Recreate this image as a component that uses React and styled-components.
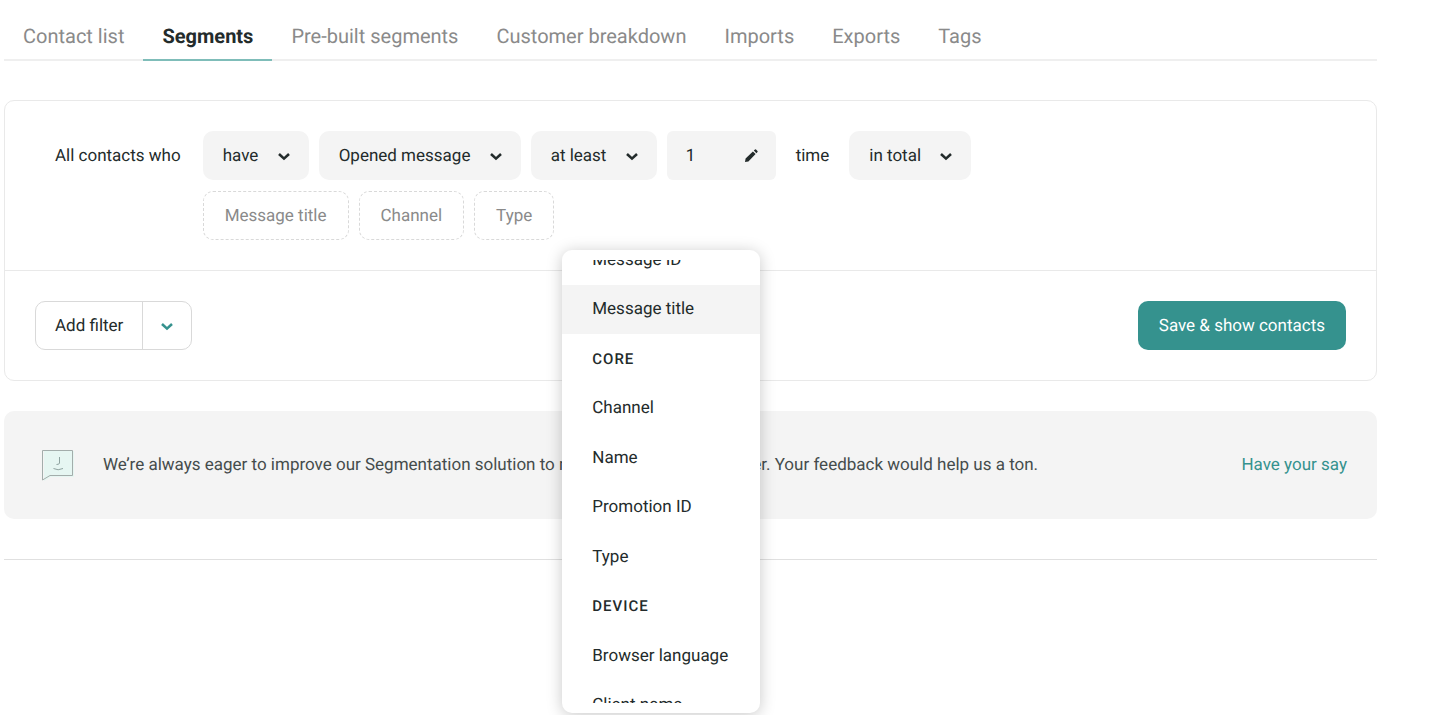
import React, { useLayoutEffect, useRef } from "react";
import styled, { createGlobalStyle } from "styled-components";

const GlobalStyle = createGlobalStyle`
  * {
    box-sizing: border-box;
  }

  body {
    margin: 0;
    background: #ffffff;
    color: #232b2b;
    font-family: Roboto, "Liberation Sans", sans-serif;
    font-size: 17px;
    line-height: 24px;
    text-rendering: geometricPrecision;
  }

  button,
  select,
  input {
    font: inherit;
    color: inherit;
    text-rendering: inherit;
  }
`;

const Page = styled.main`
  min-height: 100vh;
  padding: 12px 63px 0 4px;
`;

const Tabs = styled.nav`
  display: flex;
  border-bottom: 2px solid #efefef;
`;

const Tab = styled.a`
  margin-bottom: -2px;
  padding: 12px 19px 11px;
  border-bottom: 2px solid ${(props) => (props.$active ? "#7fbdb9" : "transparent")};
  color: ${(props) => (props.$active ? "#232b2b" : "#8a8a8a")};
  font-size: 20px;
  font-weight: ${(props) => (props.$active ? 700 : 400)};
  text-decoration: none;
`;

const Card = styled.section`
  margin-top: 39px;
  border: 1px solid #e9e9e9;
  border-radius: 10px;
`;

const Conditions = styled.div`
  display: flex;
  gap: 22px;
  padding: 30px 50px;
  border-bottom: 1px solid #e9e9e9;
`;

const Lead = styled.span`
  padding-top: 13px;
`;

const Word = styled(Lead)`
  padding-left: 10px;
  padding-right: 10px;
`;

const Rows = styled.div`
  display: flex;
  flex-direction: column;
  gap: 11px;
`;

const Row = styled.div`
  display: flex;
  gap: 10px;
`;

const SelectBox = styled.div`
  display: grid;
  align-items: center;

  > * {
    grid-area: 1 / 1;
  }

  > svg {
    justify-self: end;
    margin-right: 18px;
    pointer-events: none;
  }
`;

const Select = styled.select`
  appearance: none;
  height: 49px;
  padding: 0 50px 0 20px;
  border: 0;
  border-radius: 10px;
  background: #f4f4f4;
`;

const NumberBox = styled.label`
  display: flex;
  align-items: center;
  width: 109px;
  height: 49px;
  padding: 0 18px 0 19px;
  border-radius: 6px;
  background: #f4f4f4;
`;

const NumberInput = styled.input`
  flex: 1;
  min-width: 0;
  padding: 0;
  border: 0;
  background: none;
  outline: none;
`;

const Property = styled.button`
  height: 49px;
  padding: 0 21px;
  border: 1px dashed #d9d9d9;
  border-radius: 10px;
  background: #ffffff;
  color: #8a8a8a;
`;

const MenuAnchor = styled.div`
  position: relative;
`;

const Menu = styled.div`
  position: absolute;
  top: 59px;
  left: -2px;
  z-index: 1;
  width: 198px;
  padding: 10px 0;
  border-radius: 10px;
  background: #ffffff;
  box-shadow: 0 2px 16px rgba(0, 0, 0, 0.22);
`;

const MenuScroll = styled.div`
  height: 443px;
  overflow-y: auto;
  scrollbar-width: none;
`;

const MenuList = styled.ul`
  display: grid;
  grid-auto-rows: 1fr;
  height: 495px;
  margin: 0;
  padding: 0;
  list-style: none;
`;

const MenuHeading = styled.li`
  display: flex;
  align-items: center;
  padding: 0 30px;
  font-size: 15px;
  font-weight: 500;
  letter-spacing: 1px;
  text-transform: uppercase;
`;

const MenuItem = styled.button`
  width: 100%;
  height: 100%;
  padding: 0 0 0 30px;
  border: 0;
  background: ${(props) => (props.$highlighted ? "#f4f4f4" : "none")};
  text-align: left;
  white-space: nowrap;
`;

const Actions = styled.div`
  display: flex;
  justify-content: space-between;
  padding: 30px;
`;

const SplitButton = styled.div`
  display: flex;
  height: 49px;
  border: 1px solid #d9d9d9;
  border-radius: 10px;
`;

const SplitMain = styled.button`
  padding: 0 19px;
  border: 0;
  background: none;
`;

const SplitToggle = styled.button`
  display: flex;
  align-items: center;
  padding: 0 17px;
  border: 0;
  border-left: 1px solid #d9d9d9;
  background: none;
  color: #35928e;
`;

const SaveButton = styled.button`
  height: 49px;
  padding: 0 21px;
  border: 0;
  border-radius: 10px;
  background: #35928e;
  color: #ffffff;
`;

const Feedback = styled.aside`
  display: flex;
  align-items: center;
  min-height: 108px;
  margin-top: 30px;
  padding: 0 30px 0 37px;
  border-radius: 10px;
  background: #f4f4f4;
`;

const FeedbackText = styled.p`
  flex: 1;
  margin: 0 0 0 28px;
  color: #454c4c;
`;

const FeedbackLink = styled.a`
  color: #35928e;
  text-decoration: none;
`;

const Divider = styled.hr`
  margin: 40px 0 0;
  border: 0;
  border-top: 1px solid #e0e0e0;
`;

const tabs = [
  "Contact list",
  "Segments",
  "Pre-built segments",
  "Customer breakdown",
  "Imports",
  "Exports",
  "Tags",
];

const properties = ["Message title", "Channel", "Type"];

const menuEntries = [
  { label: "Message ID" },
  { label: "Message title" },
  { label: "Core", heading: true },
  { label: "Channel" },
  { label: "Name" },
  { label: "Promotion ID" },
  { label: "Type" },
  { label: "Device", heading: true },
  { label: "Browser language" },
  { label: "Client name" },
];

const Chevron = () => (
  <svg width="14" height="14" viewBox="0 0 14 14" fill="none" aria-hidden="true">
    <path d="M2 5l5 4.600L12 5" stroke="currentColor" strokeWidth="2.6" />
  </svg>
);

const Pencil = () => (
  <svg width="14" height="14" viewBox="0 0 14 14" fill="currentColor" aria-hidden="true">
    <path d="M1 13l.6-3.400L8.900 2.400l2.700 2.700L4.400 12.400zM9.800 1.600L11 .5q.5-.4 1 0L13.500 2q.4.5 0 1l-1.100 1.200z" />
  </svg>
);

const ChatFace = () => (
  <svg width="34" height="34" viewBox="0 0 34 34" fill="none" aria-hidden="true">
    <path d="M3 3h30v26H10l-7 4z" fill="#e6f6f2" />
    <path d="M1.500 2.500h30v25H9l-7.500 4.500z" stroke="#a3adab" />
    <path d="M18.500 9v6q0 1.500-3 1.500M12.500 20.500q4.500 2.500 9.500 0" stroke="#8fa3a0" />
  </svg>
);

const Dropdown = ({ label, value }) => (
  <SelectBox>
    <Select aria-label={label} defaultValue={value}>
      <option>{value}</option>
    </Select>
    <Chevron />
  </SelectBox>
);

const PropertyMenu = () => {
  const scrollRef = useRef(null);

  // keep the highlighted entry close to the top of the list
  useLayoutEffect(() => {
    scrollRef.current.scrollTop = 25;
  }, []);

  return (
    <Menu>
      <MenuScroll ref={scrollRef}>
        <MenuList>
          {menuEntries.map(({ label, heading }) =>
            heading ? (
              <MenuHeading key={label}>{label}</MenuHeading>
            ) : (
              <li key={label}>
                <MenuItem type="button" $highlighted={label === "Message title"}>
                  {label}
                </MenuItem>
              </li>
            )
          )}
        </MenuList>
      </MenuScroll>
    </Menu>
  );
};

const App = () => {
  return (
    <Page>
      <GlobalStyle />
      <Tabs>
        {tabs.map((tab) => (
          <Tab key={tab} href="#" $active={tab === "Segments"}>
            {tab}
          </Tab>
        ))}
      </Tabs>

      <Card>
        <Conditions>
          <Lead>All contacts who</Lead>
          <Rows>
            <Row>
              <Dropdown label="Have or have not" value="have" />
              <Dropdown label="Event" value="Opened message" />
              <Dropdown label="Comparison" value="at least" />
              <NumberBox>
                <NumberInput aria-label="Number of times" defaultValue="1" />
                <Pencil />
              </NumberBox>
              <Word>time</Word>
              <Dropdown label="Period" value="in total" />
            </Row>
            <Row>
              {properties.map((property) => (
                <Property key={property} type="button">
                  {property}
                </Property>
              ))}
              <MenuAnchor>
                <PropertyMenu />
              </MenuAnchor>
            </Row>
          </Rows>
        </Conditions>
        <Actions>
          <SplitButton>
            <SplitMain type="button">Add filter</SplitMain>
            <SplitToggle type="button" aria-label="More filters">
              <Chevron />
            </SplitToggle>
          </SplitButton>
          <SaveButton type="button">Save &amp; show contacts</SaveButton>
        </Actions>
      </Card>

      <Feedback>
        <ChatFace />
        <FeedbackText>
          We’re always eager to improve our Segmentation solution to make your work even better.
          Your feedback would help us a ton.
        </FeedbackText>
        <FeedbackLink href="#">Have your say</FeedbackLink>
      </Feedback>
      <Divider />
    </Page>
  );
};

export default App;
